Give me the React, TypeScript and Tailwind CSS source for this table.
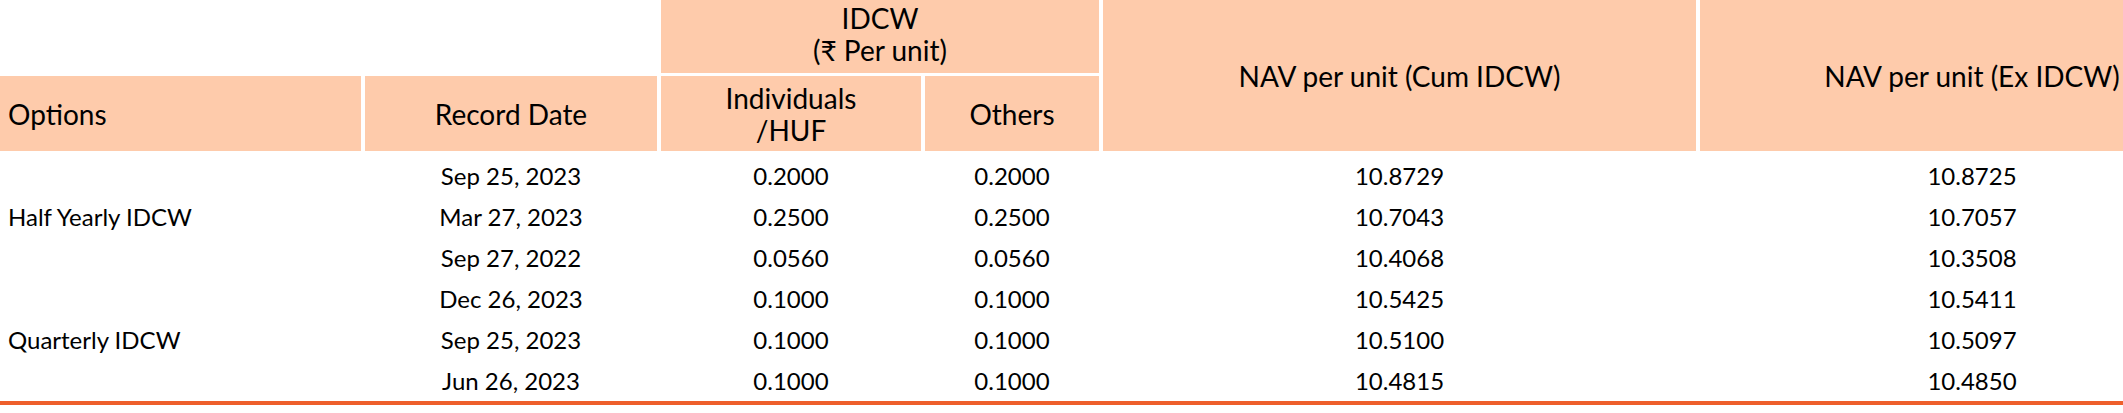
import React from 'react'

// last column runs past the visible edge, so its centre sits right of the viewport centre
const cols = 'grid grid-cols-[361px_292px_260px_174px_593px_544px] gap-x-[4px]'
const head = 'bg-[#fecbab] flex items-center'

const rows = [
  { date: 'Sep 25, 2023', ind: '0.2000', oth: '0.2000', cum: '10.8729', ex: '10.8725' },
  { date: 'Mar 27, 2023', ind: '0.2500', oth: '0.2500', cum: '10.7043', ex: '10.7057' },
  { date: 'Sep 27, 2022', ind: '0.0560', oth: '0.0560', cum: '10.4068', ex: '10.3508' },
  { date: 'Dec 26, 2023', ind: '0.1000', oth: '0.1000', cum: '10.5425', ex: '10.5411' },
  { date: 'Sep 25, 2023', ind: '0.1000', oth: '0.1000', cum: '10.5100', ex: '10.5097' },
  { date: 'Jun 26, 2023', ind: '0.1000', oth: '0.1000', cum: '10.4815', ex: '10.4850' },
]

const App = () => {
  return (
    <div className="w-[2123px] h-[413px] bg-white text-black font-['Lato','Noto_Sans',sans-serif] overflow-hidden">
      {/* header */}
      <div className={`${cols} grid-rows-[73px_75px] gap-y-[3px] text-[28px]`}>
        <div className="col-start-3 col-span-2 row-start-1 bg-[#fecbab] flex flex-col items-center justify-center pb-[5px] leading-[32px]">
          <span>IDCW</span>
          <span>(₹ Per unit)</span>
        </div>
        <div className={`${head} col-start-5 row-start-1 row-span-2 justify-center`}>NAV per unit (Cum IDCW)</div>
        <div className={`${head} col-start-6 row-start-1 row-span-2 justify-center`}>NAV per unit (Ex IDCW)</div>

        <div className={`${head} col-start-1 row-start-2 pl-[8px]`}>Options</div>
        <div className={`${head} col-start-2 row-start-2 justify-center`}>Record Date</div>
        <div className={`${head} col-start-3 row-start-2 flex-col justify-center leading-[32px]`}>
          <span>Individuals</span>
          <span>/HUF</span>
        </div>
        <div className={`${head} col-start-4 row-start-2 justify-center`}>Others</div>
      </div>

      {/* body */}
      <div className={`${cols} grid-rows-[repeat(6,41px)] mt-[4px] text-[24px] border-b-4 border-[#ee5f2b]`}>
        <div className="col-start-1 row-start-1 row-span-3 flex items-center pl-[8px]">Half Yearly IDCW</div>
        <div className="col-start-1 row-start-4 row-span-3 flex items-center pl-[8px]">Quarterly IDCW</div>
        {rows.map((r, i) => (
          <React.Fragment key={i}>
            <div className="col-start-2 flex items-center justify-center">{r.date}</div>
            <div className="col-start-3 flex items-center justify-center">{r.ind}</div>
            <div className="col-start-4 flex items-center justify-center">{r.oth}</div>
            <div className="col-start-5 flex items-center justify-center">{r.cum}</div>
            <div className="col-start-6 flex items-center justify-center">{r.ex}</div>
          </React.Fragment>
        ))}
      </div>
    </div>
  )
}

export default App
